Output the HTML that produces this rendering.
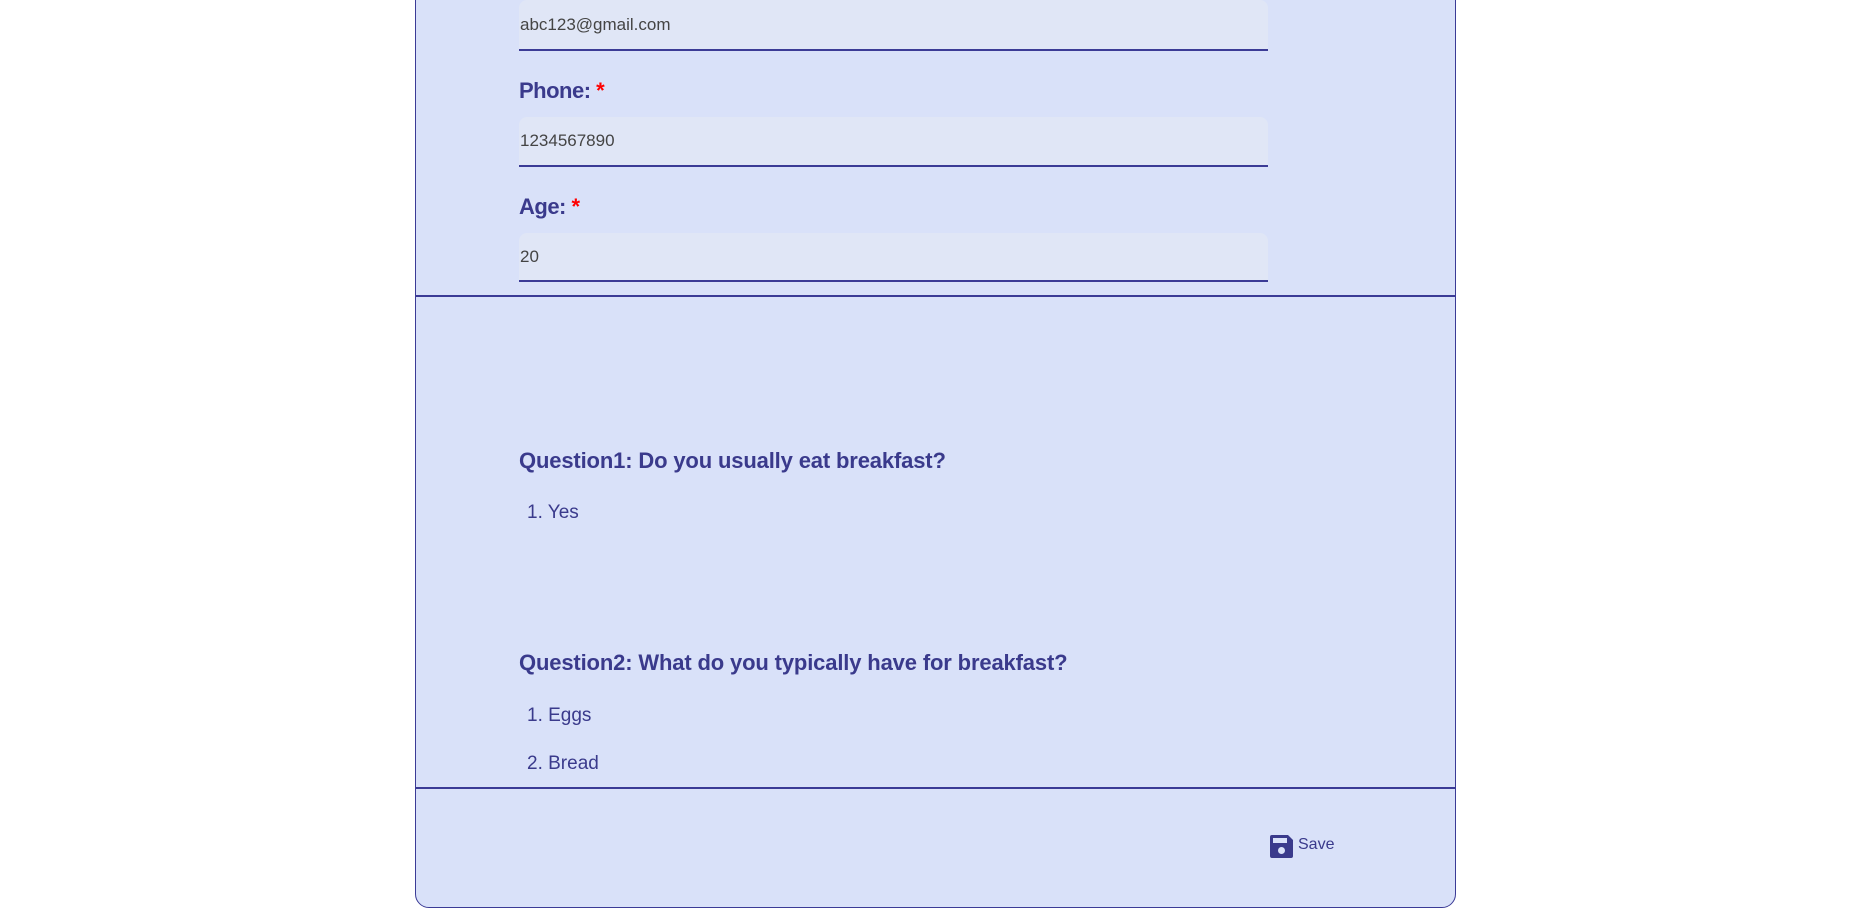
<!DOCTYPE html>
<html><head><meta charset="utf-8"><style>
body{margin:0;width:1872px;height:908px;background:#fff;position:relative;overflow:hidden;font-family:"Liberation Sans",Arial,sans-serif;}
.card{position:absolute;left:415px;top:-20px;width:1039px;height:926px;background:#d9e1f9;border:1px solid #3b3b96;border-radius:0 0 14px 14px;}
.inp{position:absolute;left:519px;width:749px;background:#e0e6f6;border-bottom:2px solid #3b3b96;border-radius:8px 8px 0 0;font-size:17px;color:#444;box-sizing:border-box;padding-left:1px;}
.lbl{position:absolute;left:519px;font-size:22px;font-weight:bold;color:#3a3a8c;letter-spacing:-0.5px;}
.lbl span{color:#f00;}
.hr{position:absolute;left:415px;width:1041px;height:2px;background:#3b3b96;}
.q{position:absolute;left:519px;font-size:22px;font-weight:bold;color:#3a3a8c;letter-spacing:-0.15px;white-space:nowrap;}
.li{position:absolute;left:527px;font-size:19px;color:#3a3a8c;}
</style></head><body>
<div class="card"></div>
<div class="inp" style="top:0;height:51px;line-height:50px;">abc123@gmail.com</div>
<div class="lbl" style="top:78px;">Phone: <span>*</span></div>
<div class="inp" style="top:117px;height:50px;line-height:48px;">1234567890</div>
<div class="lbl" style="top:194px;">Age: <span>*</span></div>
<div class="inp" style="top:233px;height:49px;line-height:48px;">20</div>
<div class="hr" style="top:295px;"></div>
<div class="q" style="top:448px;">Question1: Do you usually eat breakfast?</div>
<div class="li" style="top:502px;">1. Yes</div>
<div class="q" style="top:650px;">Question2: What do you typically have for breakfast?</div>
<div class="li" style="top:705px;">1. Eggs</div>
<div class="li" style="top:753px;">2. Bread</div>
<div class="hr" style="top:787px;"></div>
<svg style="position:absolute;left:1270px;top:835px" width="23" height="23" viewBox="0 0 23 23"><path d="M2 0H18L23 5V21Q23 23 21 23H2Q0 23 0 21V2Q0 0 2 0Z" fill="#3a3a8c"/><rect x="3" y="3" width="14" height="5" fill="#d9e1f9"/><circle cx="11.5" cy="15.5" r="3.5" fill="#d9e1f9"/></svg>
<div style="position:absolute;left:1298px;top:836px;font-size:16px;color:#3a3a8c;">Save</div>
</body></html>
